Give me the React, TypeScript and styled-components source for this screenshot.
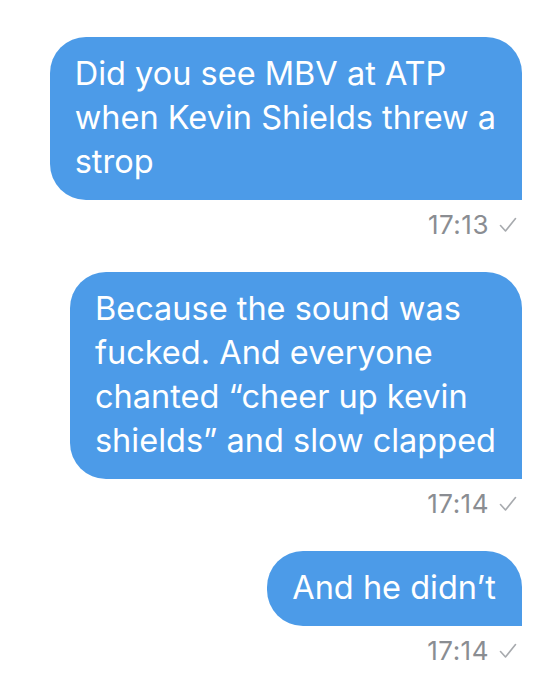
import React from "react";
import styled, { createGlobalStyle } from "styled-components";

const GlobalStyle = createGlobalStyle`
  html, body {
    margin: 0;
    padding: 0;
    background: #ffffff;
  }
  body {
    font-family: Inter, "Noto Sans", "Liberation Sans", sans-serif;
    -webkit-font-smoothing: antialiased;
  }
`;

const Thread = styled.div`
  display: flex;
  flex-direction: column;
  align-items: flex-end;
  padding: 37px 31px 20px 0;
  width: 553px;
  box-sizing: border-box;
`;

const Message = styled.div`
  display: flex;
  flex-direction: column;
  align-items: flex-end;
  margin-bottom: 32px;
`;

const Bubble = styled.div`
  background: #4c9be8;
  color: #ffffff;
  font-size: 32.5px;
  line-height: 44px;
  padding: 15px 26px 16px 25px;
  border-radius: 36px 36px 0 36px;
  white-space: nowrap;
`;

const Meta = styled.div`
  display: flex;
  align-items: center;
  gap: 10px;
  margin-top: 10px;
  margin-right: 5px;
  font-size: 26px;
  line-height: 30px;
  letter-spacing: 0.5px;
  color: #8a8d92;
`;

const Tick = () => (
  <svg width="18" height="16" viewBox="0 0 18 16" fill="none">
    <path d="M1.5 8.5 L6.5 14 L16.5 1.5" stroke="#a7aaae" strokeWidth="1.6" strokeLinecap="round" strokeLinejoin="round" />
  </svg>
);

const messages = [
  { lines: ["Did you see MBV at ATP", "when Kevin Shields threw a", "strop"], time: "17:13" },
  {
    lines: [
      "Because the sound was",
      "fucked. And everyone",
      "chanted \u201ccheer up kevin",
      "shields\u201d and slow clapped",
    ],
    time: "17:14",
  },
  { lines: ["And he didn\u2019t"], time: "17:14" },
];

export default function App() {
  return (
    <>
      <GlobalStyle />
      <Thread>
        {messages.map((m, i) => (
          <Message key={i}>
            <Bubble>
              {m.lines.map((l, j) => (
                <React.Fragment key={j}>
                  {l}
                  {j < m.lines.length - 1 && <br />}
                </React.Fragment>
              ))}
            </Bubble>
            <Meta>
              <span>{m.time}</span>
              <Tick />
            </Meta>
          </Message>
        ))}
      </Thread>
    </>
  );
}
